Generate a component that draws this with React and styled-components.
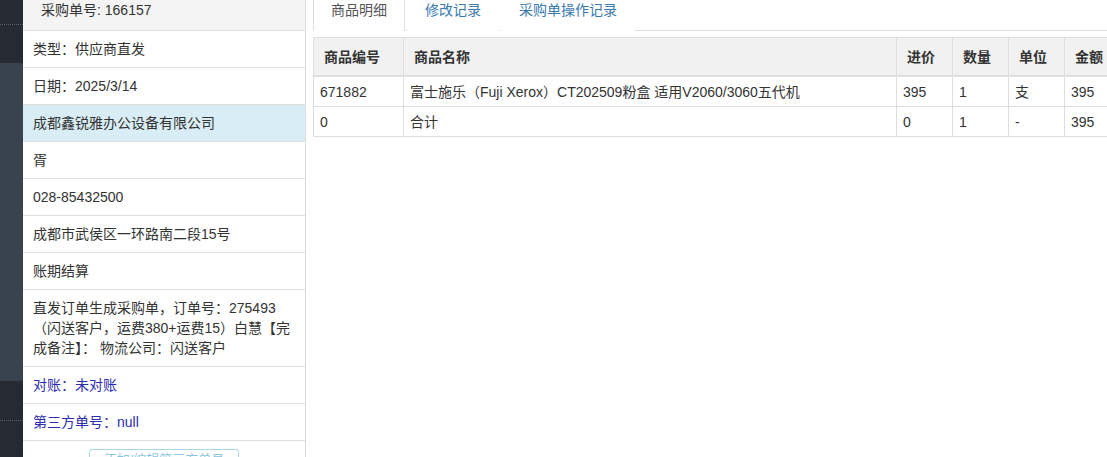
import React from "react";
import styled, { createGlobalStyle } from "styled-components";

const GlobalStyle = createGlobalStyle`
    html, body {
        margin: 0;
        padding: 0;
        background: #fff;
        overflow: hidden;
    }
    body {
        font-family: "Liberation Sans", "Noto Sans CJK SC", Arial, sans-serif;
        font-size: 14px;
        color: #333;
    }
`

const Page = styled.div`
    display: flex;
    width: 1107px;
    height: 457px;
    overflow: hidden;
`

const Sidebar = styled.div`
    width: 23px;
    flex-shrink: 0;
    display: flex;
    flex-direction: column;
    background-color: #262b33;
`

const SideItem = styled.div`
    height: ${({ h }) => h}px;
    flex-shrink: 0;
    background-color: ${({ active }) => (active ? "#39434f" : "#262b33")};
    border-bottom: ${({ dotted }) => (dotted ? "1px dotted #59606a" : "none")};
    box-sizing: border-box;
`

const InfoPanel = styled.div`
    width: 282px;
    flex-shrink: 0;
    border-right: 1px solid #dcdcdc;
    display: flex;
    flex-direction: column;
`

const InfoRow = styled.div`
    padding: ${({ head }) => (head ? "0 10px 10px 18px" : "8px 10px")};
    line-height: 20px;
    border-bottom: 1px solid #dedede;
    background-color: ${({ head, active }) =>
        head ? "#f4f4f4" : active ? "#d9edf7" : "#fff"};
    color: ${({ link }) => (link ? "#2d2db0" : "#333")};
`

const ButtonRow = styled.div`
    display: flex;
    justify-content: center;
    padding-top: 8px;
`

const GhostButton = styled.button`
    font-family: inherit;
    font-size: 13px;
    line-height: 18px;
    padding: 1px 14px;
    background: #fff;
    color: #8cc4dc;
    border: 1px solid #a9d6e6;
    border-radius: 3px;
`

const Main = styled.div`
    flex: 1;
    min-width: 0;
    padding-left: 7px;
    overflow: hidden;
`

const Tabs = styled.div`
    display: flex;
    height: 30px;
    border-bottom: 1px solid #dedede;
    width: 794px;
`

const Tab = styled.div`
    height: 31px;
    box-sizing: border-box;
    padding: 0 17px;
    margin-right: 2px;
    line-height: 20px;
    color: ${({ active }) => (active ? "#555" : "#3779b0")};
    background: #fff;
    border: 1px solid ${({ active }) => (active ? "#dedede" : "transparent")};
    border-top: none;
    border-bottom-color: ${({ active }) => (active ? "#fff" : "transparent")};
`

const Table = styled.table`
    margin-top: 6px;
    border-collapse: collapse;
    table-layout: fixed;
    width: 812px;
    border: 1px solid #dedede;
`

const Th = styled.th`
    text-align: left;
    font-weight: bold;
    background-color: #f1f1f1;
    padding: 9px 10px 8px;
    line-height: 20px;
    border: 1px solid #dedede;
    border-bottom: 2px solid #dedede;
    white-space: nowrap;
`

const Td = styled.td`
    padding: 5px 6px 4px;
    line-height: 20px;
    border: 1px solid #dedede;
    white-space: nowrap;
    overflow: hidden;
`

const columns = [
    { key: "code", title: "商品编号", w: 90 },
    { key: "name", title: "商品名称", w: 493 },
    { key: "price", title: "进价", w: 56 },
    { key: "qty", title: "数量", w: 56 },
    { key: "unit", title: "单位", w: 56 },
    { key: "amount", title: "金额", w: 61 },
];

const rows = [
    { code: "671882", name: "富士施乐（Fuji Xerox）CT202509粉盒 适用V2060/3060五代机", price: "395", qty: "1", unit: "支", amount: "395" },
    { code: "0", name: "合计", price: "0", qty: "1", unit: "-", amount: "395" },
];

export default function App() {
    return (
        <>
            <GlobalStyle />
            <Page>
                <Sidebar>
                    <SideItem h={25} dotted />
                    <SideItem h={38} />
                    <SideItem h={318} active />
                    <SideItem h={40} dotted />
                    <SideItem h={36} />
                </Sidebar>

                <InfoPanel>
                    <InfoRow head>采购单号: 166157</InfoRow>
                    <InfoRow>类型：供应商直发</InfoRow>
                    <InfoRow>日期：2025/3/14</InfoRow>
                    <InfoRow active>成都鑫锐雅办公设备有限公司</InfoRow>
                    <InfoRow>胥</InfoRow>
                    <InfoRow>028-85432500</InfoRow>
                    <InfoRow>成都市武侯区一环路南二段15号</InfoRow>
                    <InfoRow>账期结算</InfoRow>
                    <InfoRow>
                        直发订单生成采购单，订单号：275493<br />
                        （闪送客户，运费380+运费15）白慧【完<br />
                        成备注】： 物流公司：闪送客户
                    </InfoRow>
                    <InfoRow link>对账：未对账</InfoRow>
                    <InfoRow link>第三方单号：null</InfoRow>
                    <ButtonRow>
                        <GhostButton>添加/编辑第三方单号</GhostButton>
                    </ButtonRow>
                </InfoPanel>

                <Main>
                    <Tabs>
                        <Tab active>商品明细</Tab>
                        <Tab>修改记录</Tab>
                        <Tab>采购单操作记录</Tab>
                    </Tabs>
                    <Table>
                        <colgroup>
                            {columns.map((c) => (
                                <col key={c.key} style={{ width: c.w }} />
                            ))}
                        </colgroup>
                        <thead>
                            <tr>
                                {columns.map((c) => (
                                    <Th key={c.key}>{c.title}</Th>
                                ))}
                            </tr>
                        </thead>
                        <tbody>
                            {rows.map((r, i) => (
                                <tr key={i}>
                                    {columns.map((c) => (
                                        <Td key={c.key}>{r[c.key]}</Td>
                                    ))}
                                </tr>
                            ))}
                        </tbody>
                    </Table>
                </Main>
            </Page>
        </>
    );
}
